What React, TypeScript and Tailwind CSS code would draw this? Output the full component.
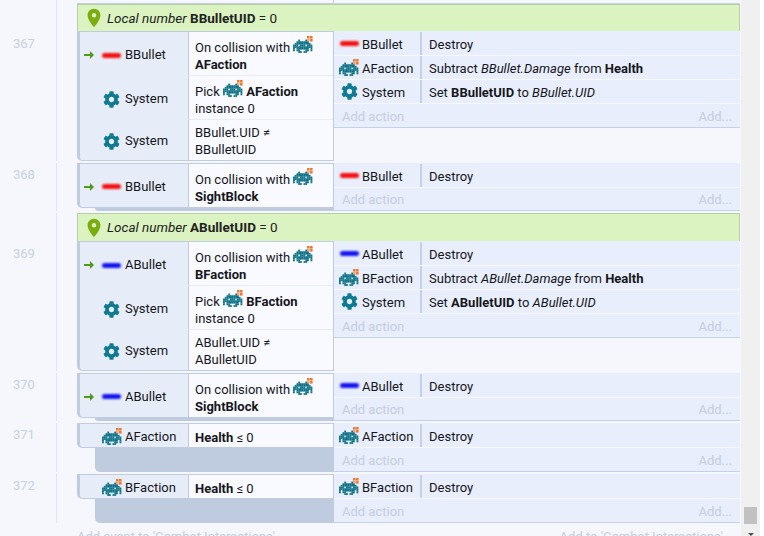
import type { ReactNode } from 'react';
import { FaCog } from 'react-icons/fa';
import { MdLocationOn } from 'react-icons/md';

const invaderCells = [
  '...#...#...',
  '..#######..',
  '.#########.',
  '###.###.###',
  '###########',
  '#.#######.#',
  '#.##...##.#',
  '...##.##...',
];

function Invader({ inText }: { inText?: boolean }) {
  return (
    <svg
      viewBox="0 0 20 17"
      className={`w-[20px] h-[17px] shrink-0 inline-block ${inText ? 'align-middle -my-[4px] -translate-y-[4px]' : ''}`}
    >
      <g fill="#0f7288">
        {invaderCells.map((row, y) =>
          row.split('').map((c, x) =>
            c === '#' ? <rect key={`${x}-${y}`} x={x * 1.75} y={y * 1.65 + 3.6} width="1.85" height="1.75" /> : null
          )
        )}
      </g>
      <g fill="#ec7a30">
        <rect x="14" y="0" width="2.6" height="2.6" />
        <rect x="17" y="0" width="2.6" height="2.6" />
        <rect x="17" y="3" width="2.6" height="2.6" />
        <rect x="14" y="3" width="2.6" height="2.6" opacity="0.6" />
      </g>
    </svg>
  );
}

function Bullet({ color }: { color: 'red' | 'blue' }) {
  return (
    <span
      className={`inline-block w-[19px] h-[5px] rounded-full blur-[1px] shrink-0 ${
        color === 'red' ? 'bg-[#f50f0f]' : 'bg-[#1414f0]'
      }`}
    />
  );
}

function Gear() {
  return <FaCog className="w-[17px] h-[17px] text-[#0f7a90] shrink-0" />;
}

function Trigger() {
  return (
    <svg viewBox="0 0 10 8" className="w-[10px] h-[8px] shrink-0">
      <path d="M0 3h6V0l4 4-4 4V5H0z" fill="#4f9a1c" />
    </svg>
  );
}

type Obj = { kind: 'red' | 'blue' | 'gear' | 'invader'; name: string };

function ObjIcon({ kind }: { kind: Obj['kind'] }) {
  if (kind === 'red' || kind === 'blue') return <Bullet color={kind} />;
  if (kind === 'gear') return <Gear />;
  return <Invader />;
}

type Cond = Obj & { trigger?: boolean; h: string; text: ReactNode };
type Act = Obj & { text: ReactNode };

function Local({ name, h }: { name: string; h: string }) {
  return (
    <div className={`${h} bg-[#dbf3c0] border border-[#b4d0a4] border-b-0 flex items-center pl-[5px] text-[13.5px] text-[#222]`}>
      <MdLocationOn className="w-[22px] h-[22px] text-[#7cab12] shrink-0" />
      <span className="ml-[2px]">
        <i>Local number</i> <b>{name}</b> = 0
      </span>
    </div>
  );
}

function ActionRow({ a }: { a: Act }) {
  return (
    <div className="h-[24px] flex border-b border-[#f6f8fe]">
      <div className="w-[88px] flex items-center pl-[5px] gap-[3px] border-r-2 border-[#c5d1e6]">
        <span className="w-[20px] flex justify-center">
          <ObjIcon kind={a.kind} />
        </span>
        <span className="pt-[2px]">{a.name}</span>
      </div>
      <div className="flex-1 flex items-center pl-[7px] pt-[2px] whitespace-nowrap">{a.text}</div>
    </div>
  );
}

function AddAction({ h }: { h: string }) {
  return (
    <div className={`${h} flex items-center justify-between pt-[2px] px-[8px] text-[#c5cde0] border-b border-[#c5d1e6]`}>
      <span>Add action</span>
      <span>Add...</span>
    </div>
  );
}

function Event({
  num,
  conds,
  acts,
  local,
  localH = 'h-[27px]',
  numTop,
  addH = 'h-[24px]',
}: {
  num: number;
  conds: Cond[];
  acts: Act[];
  local?: string;
  localH?: string;
  numTop: string;
  addH?: string;
}) {
  return (
    <div className="flex shrink-0 mb-[2px]">
      <div className={`w-[57px] border-r border-[#dfe4f3] text-[#c8d0e4] pl-[13px] ${numTop}`}>{num}</div>
      <div className="w-[20px]" />
      <div className="w-[663px] flex flex-col">
        {local && <Local name={local} h={localH} />}
        <div className="flex">
          <div className="w-[257px] flex flex-col">
            <div className="flex flex-col bg-[#e6edf8] border-[#c0cde0] border-t border-l-[3px] border-r border-b rounded-bl-[5px] overflow-hidden">
              {conds.map((c, i) => (
                <div key={i} className={`flex ${c.h}`}>
                  <div className="w-[108px] flex items-center pt-[2px]">
                    <span className="w-[21px] pl-[4px] flex">{c.trigger && <Trigger />}</span>
                    <span className="w-[21px] flex justify-center shrink-0">
                      <ObjIcon kind={c.kind} />
                    </span>
                    <span className="ml-[3px]">{c.name}</span>
                  </div>
                  <div
                    className={`flex-1 bg-[#f8faff] border-l border-[#c0cde0] pl-[6px] leading-[17px] flex flex-col justify-center ${
                      i === 2 ? 'pt-[2px]' : 'pt-[5px]'
                    } ${i < conds.length - 1 ? 'border-b border-b-[#e6edf8]' : ''}`}
                  >
                    {c.text}
                  </div>
                </div>
              ))}
            </div>
            <div className="flex-1 ml-[18px] bg-[#bfcbdf] rounded-bl-[5px]" />
          </div>
          <div className="flex-1 flex flex-col bg-[#f5f7fd]">
            <div className="bg-[#e8eefb] pt-[1px]">
              {acts.map((a, i) => (
                <ActionRow key={i} a={a} />
              ))}
              <AddAction h={addH} />
            </div>
          </div>
        </div>
      </div>
    </div>
  );
}

const collision = (target: string) => (
  <>
    <div>
      On collision with <Invader inText />
    </div>
    <div className="font-bold">{target}</div>
  </>
);

const pick = (target: string) => (
  <>
    <div>
      Pick <Invader inText /> <b>{target}</b>
    </div>
    <div>instance 0</div>
  </>
);

const health = (
  <div className="-mt-[2px]">
    <b>Health</b> ≤ 0
  </div>
);

const destroy = <span>Destroy</span>;

function subtract(from: string) {
  return (
    <span>
      Subtract <i>{from}.Damage</i> from <b>Health</b>
    </span>
  );
}

function setUid(name: string) {
  return (
    <span>
      Set <b>{name}UID</b> to <i>{name}.UID</i>
    </span>
  );
}

export default function App() {
  return (
    <div
      className="w-[764px] h-[536px] overflow-hidden flex bg-[#f5f7fd] text-[13px] text-[#16161c]"
      style={{ fontFamily: 'Roboto, sans-serif' }}
    >
      <div className="w-[741px] flex flex-col">
        <div className="h-[4px] shrink-0 flex">
          <div className="w-[57px] border-r border-[#dfe4f3]" />
          <div className="ml-[20px] w-[257px] border-b border-r border-[#c0cde0]" />
          <div className="w-[406px] border-b border-[#c5d1e6]" />
        </div>
        <Event
          num={367}
          local="BBulletUID"
          numTop="pt-[30px]"
          conds={[
            { kind: 'red', name: 'BBullet', trigger: true, h: 'h-[44px]', text: collision('AFaction') },
            { kind: 'gear', name: 'System', h: 'h-[44px]', text: pick('AFaction') },
            {
              kind: 'gear',
              name: 'System',
              h: 'h-[40px]',
              text: (
                <>
                  <div>BBullet.UID ≠</div>
                  <div>BBulletUID</div>
                </>
              ),
            },
          ]}
          acts={[
            { kind: 'red', name: 'BBullet', text: destroy },
            { kind: 'invader', name: 'AFaction', text: subtract('BBullet') },
            { kind: 'gear', name: 'System', text: setUid('BBullet') },
          ]}
        />
        <Event
          num={368}
          numTop="pt-[2px]"
          addH="h-[23px]"
          conds={[{ kind: 'red', name: 'BBullet', trigger: true, h: 'h-[43px]', text: collision('SightBlock') }]}
          acts={[{ kind: 'red', name: 'BBullet', text: destroy }]}
        />
        <Event
          num={369}
          local="ABulletUID"
          localH="h-[28px]"
          numTop="pt-[31px]"
          conds={[
            { kind: 'blue', name: 'ABullet', trigger: true, h: 'h-[44px]', text: collision('BFaction') },
            { kind: 'gear', name: 'System', h: 'h-[44px]', text: pick('BFaction') },
            {
              kind: 'gear',
              name: 'System',
              h: 'h-[40px]',
              text: (
                <>
                  <div>ABullet.UID ≠</div>
                  <div>ABulletUID</div>
                </>
              ),
            },
          ]}
          acts={[
            { kind: 'blue', name: 'ABullet', text: destroy },
            { kind: 'invader', name: 'BFaction', text: subtract('ABullet') },
            { kind: 'gear', name: 'System', text: setUid('ABullet') },
          ]}
        />
        <Event
          num={370}
          numTop="pt-[2px]"
          addH="h-[23px]"
          conds={[{ kind: 'blue', name: 'ABullet', trigger: true, h: 'h-[43px]', text: collision('SightBlock') }]}
          acts={[{ kind: 'blue', name: 'ABullet', text: destroy }]}
        />
        <Event
          num={371}
          numTop="pt-[2px]"
          conds={[{ kind: 'invader', name: 'AFaction', h: 'h-[23px]', text: health }]}
          acts={[{ kind: 'invader', name: 'AFaction', text: destroy }]}
        />
        <Event
          num={372}
          numTop="pt-[2px]"
          conds={[{ kind: 'invader', name: 'BFaction', h: 'h-[23px]', text: health }]}
          acts={[{ kind: 'invader', name: 'BFaction', text: destroy }]}
        />
        <div className="shrink-0 flex justify-between pl-[77px] pr-[18px] pt-[2px] text-[#c5cde0] whitespace-nowrap">
          <span>Add event to 'Combat Interactions'</span>
          <span>Add to 'Combat Interactions'</span>
        </div>
      </div>
      <div className="w-[19px] bg-[#f0f0f0] flex flex-col items-center justify-end">
        <div className="w-[13px] h-[17px] bg-[#c1c1c1] mb-[9px]" />
        <svg viewBox="0 0 6 3" className="w-[6px] h-[3px]">
          <path d="M0 0h6L3 3z" fill="#505050" />
        </svg>
      </div>
      <div className="w-[4px] bg-white" />
    </div>
  );
}
